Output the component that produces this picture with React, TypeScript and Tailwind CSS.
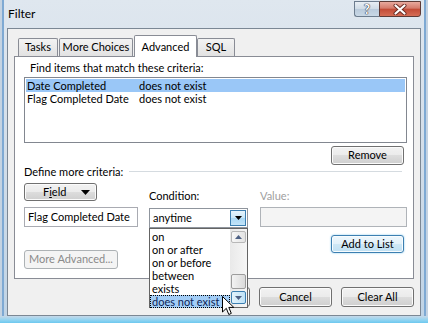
import React from 'react';

const font = { fontFamily: 'Lato, "Noto Sans", sans-serif' };

const btn =
  'flex items-center justify-center whitespace-nowrap rounded-[3px] border border-[#707070] bg-[linear-gradient(to_bottom,#f2f2f2_0%,#ebebeb_50%,#dddddd_50%,#cfcfcf_100%)] shadow-[inset_0_0_0_1px_#fbfbfb] text-[11px] font-normal text-black';

const conditions = ['on', 'on or after', 'on or before', 'between', 'exists', 'does not exist'];

const Tab: React.FC<{ label: string; w: string; active?: boolean }> = ({ label, w, active }) =>
  active ? (
    <div className={`${w} relative z-10 -mb-px flex h-[22px] items-start justify-center whitespace-nowrap rounded-t-[2px] border border-b-0 border-[#898c95] bg-white pt-[3px] text-[11px]`}>
      {label}
    </div>
  ) : (
    <div className={`${w} flex h-[18px] items-center justify-center whitespace-nowrap rounded-t-[2px] border border-b-0 border-[#898c95] bg-[linear-gradient(to_bottom,#f3f3f3,#e2e2e2)] text-[11px]`}>
      {label}
    </div>
  );

const Cursor: React.FC = () => (
  <svg width="13" height="20" viewBox="0 0 13 20" className="absolute left-[222px] top-[296px] z-30">
    <path d="M0.5 0.5 L0.5 16 L4.3 12.3 L6.8 18.5 L9.3 17.4 L6.8 11.4 L11.8 11.4 Z" fill="#fff" stroke="#000" strokeWidth="1" strokeLinejoin="miter" />
  </svg>
);

const ScrollArrow: React.FC<{ up?: boolean }> = ({ up }) => (
  <svg width="7" height="4" viewBox="0 0 7 4">
    <path d={up ? 'M0 4 L3.5 0 L7 4 Z' : 'M0 0 L3.5 4 L7 0 Z'} fill="#4d6185" />
  </svg>
);

const App: React.FC = () => {
  return (
    <div
      style={font}
      className="relative flex h-[323px] w-[428px] flex-col overflow-hidden whitespace-nowrap bg-[linear-gradient(180deg,#dfe7ef_0%,#d3dee9_45%,#bfd3e5_100%)] text-black shadow-[inset_2px_0_0_#c4d3e2,inset_4px_0_0_#7ea9d3,inset_-2px_0_0_#c4d3e2,inset_-4px_0_0_#7ea9d3]"
    >
      {/* Title bar */}
      <div className="flex h-[28px] items-start justify-between pl-[8px] pr-[7px]">
        <span className="pt-[6px] text-[12px] leading-[16px]">Filter</span>
        <div className="mt-px flex h-[16px]">
          <div className="flex w-[25px] items-center justify-center rounded-bl-[3px] border border-r-0 border-[#6c7c8e] bg-[linear-gradient(to_bottom,#e8eef4_0%,#cfdbe6_50%,#b9cadb_50%,#c9d8e6_100%)]">
            <span className="text-[13px] font-bold leading-none text-white [text-shadow:0_0_1px_#334,0_0_1px_#334,0_0_1px_#334]">?</span>
          </div>
          <div className="flex w-[42px] items-center justify-center rounded-br-[3px] border border-[#5d3a36] bg-[linear-gradient(to_bottom,#e8a99e_0%,#d47a6b_45%,#c24a36_50%,#d56d55_100%)]">
            <svg width="14" height="11" viewBox="0 0 14 11">
              <path d="M2.5 1.5 L11.5 9.5 M11.5 1.5 L2.5 9.5" stroke="#6a2a22" strokeWidth="4" strokeLinecap="round" />
              <path d="M2.5 1.5 L11.5 9.5 M11.5 1.5 L2.5 9.5" stroke="#fff" strokeWidth="2.2" strokeLinecap="round" />
            </svg>
          </div>
        </div>
      </div>

      {/* Client area */}
      <div className="flex flex-1 px-[7px]">
        <div className="flex flex-1 flex-col border border-[#7b8794] bg-[#f0f0f0] px-[6px] pt-[6px]">
          <div className="flex h-[21px] items-end pl-[4px]">
            <Tab label="Tasks" w="w-[40px]" />
            <Tab label="More Choices" w="ml-px w-[74px]" />
            <Tab label="Advanced" w="ml-px w-[63px]" active />
            <Tab label="SQL" w="w-[38px]" />
          </div>

          {/* Panel */}
          <div className="flex h-[223px] flex-col border border-[#898c95] bg-white pl-[9px] text-[11px]">
            <p className="ml-[6px] mt-[3px] h-[15px] leading-[15px]">Find items that match these criteria:</p>
            <div className="mt-[2px] h-[66px] w-[383px] border border-[#828790] p-px">
              <div className="flex h-[13px] items-center bg-[#9ac7f7] pl-[1px] leading-[13px]">
                <span className="w-[112px]">Date Completed</span>
                <span>does not exist</span>
              </div>
              <div className="flex h-[13px] items-center pl-[1px] leading-[13px]">
                <span className="w-[112px]">Flag Completed Date</span>
                <span>does not exist</span>
              </div>
            </div>
            <div className="mr-[9px] mt-[3px] flex justify-end">
              <button className={`${btn} h-[19px] w-[73px]`}>Remove</button>
            </div>
            <div className="flex h-[13px] items-center leading-[13px]">
              <span>Define more criteria:</span>
              <div className="ml-[6px] mr-[11px] h-px flex-1 bg-[#d5dbe0]" />
            </div>

            <div className="flex items-start">
              <div className="flex w-[114px] flex-col">
                <button className={`${btn} mt-[5px] h-[18px] w-[73px] !justify-start pl-[18px]`}>
                  <span>
                    F<span className="underline">i</span>eld
                  </span>
                  <svg width="9" height="5" viewBox="0 0 9 5" className="ml-auto mr-[6px]">
                    <path d="M0 0 L9 0 L4.5 5 Z" fill="#000" />
                  </svg>
                </button>
                <div className="mt-[6px] flex h-[20px] items-center border border-[#a9abb2] pl-[3px]">Flag Completed Date</div>
                <button className="mt-[23px] flex h-[19px] w-[94px] items-center justify-center rounded-[3px] border border-[#adb2b5] bg-[#f4f4f4] text-[11px] font-normal text-[#8a8a8a]">
                  More Advanced...
                </button>
              </div>

              <div className="ml-[11px] flex w-[99px] flex-col">
                <span className="mt-[11px] h-[13px] leading-[13px]">Condition:</span>
                <div className="relative mt-[6px] flex h-[20px] items-center border border-[#8f959d]">
                  <span className="flex-1 pl-[3px]">anytime</span>
                  <div className="mr-px flex h-[16px] w-[16px] items-center justify-center border border-[#3c7fb1] bg-[linear-gradient(to_bottom,#e6f4fc_0%,#c9e7f9_50%,#a9d8f5_50%,#c3e4f8_100%)]">
                    <svg width="7" height="4" viewBox="0 0 7 4">
                      <path d="M0 0 L7 0 L3.5 4 Z" fill="#000" />
                    </svg>
                  </div>

                  {/* Open drop-down list */}
                  <div className="absolute left-[-1px] top-[19px] z-20 flex h-[80px] w-[99px] border border-[#646464] bg-white">
                    <div className="flex flex-1 flex-col pt-px">
                      {conditions.map((c) =>
                        c === 'does not exist' ? (
                          <div key={c} className="flex h-[13px] items-center border border-dotted border-black bg-[#a3cdf6] pl-px leading-[11px] text-[#0c1f57]">
                            {c}
                          </div>
                        ) : (
                          <div key={c} className="flex h-[13px] items-center pl-[2px] leading-[13px]">
                            {c}
                          </div>
                        )
                      )}
                    </div>
                    <div className="flex w-[17px] flex-col items-center bg-[linear-gradient(to_right,#e9e9e9,#f6f6f6)] pt-[2px]">
                      <div className="flex h-[12px] w-[15px] items-center justify-center rounded-[2px] border border-[#b8b8b8] bg-[linear-gradient(to_right,#f7f7f7,#e3e3e3)]">
                        <ScrollArrow up />
                      </div>
                      <div className="mt-[31px] h-[15px] w-[15px] rounded-[2px] border border-[#9c9c9c] bg-[linear-gradient(to_right,#f3f3f3,#dadada)]" />
                      <div className="mt-[2px] flex h-[13px] w-[15px] items-center justify-center rounded-[2px] border border-[#3c7fb1] bg-[linear-gradient(to_right,#e3f3fc,#bfe2f7)]">
                        <ScrollArrow />
                      </div>
                    </div>
                  </div>
                </div>
              </div>

              <div className="ml-[12px] flex w-[147px] flex-col">
                <span className="mt-[11px] h-[13px] leading-[13px] text-[#a0a0a0]">Value:</span>
                <div className="mt-[5px] h-[20px] border border-[#afb3b8] bg-[#f4f4f4]" />
                <div className="mr-[3px] mt-[8px] flex justify-end">
                  <button className="flex h-[18px] w-[73px] items-center justify-center rounded-[3px] border border-[#3c7fb1] bg-[linear-gradient(to_bottom,#eef7fc_0%,#e2f1fa_50%,#cfe8f6_50%,#c0e0f3_100%)] text-[11px] font-normal shadow-[inset_0_0_0_1px_#f8fcfe,0_0_2px_#7cc4ec]">
                    Add to List
                  </button>
                </div>
              </div>
            </div>
          </div>

          {/* Bottom buttons */}
          <div className="mt-[8px] flex justify-end gap-[9px]">
            <button className={`${btn} h-[20px] w-[73px]`}>OK</button>
            <button className={`${btn} h-[20px] w-[73px]`}>Cancel</button>
            <button className={`${btn} h-[20px] w-[73px]`}>Clear All</button>
          </div>
        </div>
      </div>

      {/* Bottom frame */}
      <div className="h-[7px] bg-[linear-gradient(to_bottom,#c6d8e8_0%,#8fd3f1_60%,#6cc8ef_100%)]" />

      <Cursor />
    </div>
  );
};

export default App;
